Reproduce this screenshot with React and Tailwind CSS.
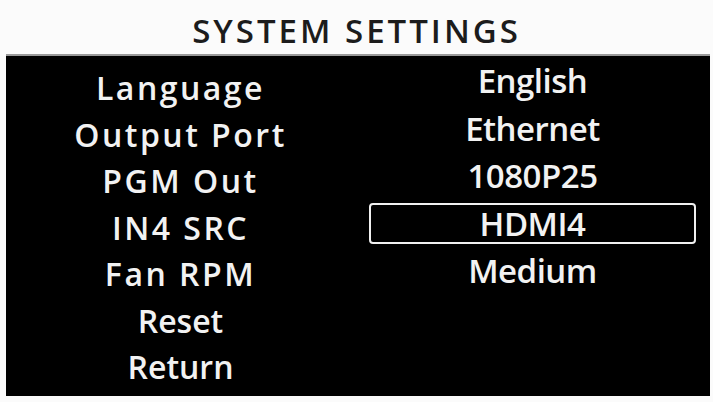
export default function App() {
  const labels = ["Language", "Output Port", "PGM Out", "IN4 SRC", "Fan RPM", "Reset", "Return"];
  const values = ["English", "Ethernet", "1080P25", "HDMI4", "Medium"];
  return (
    <div className="w-[713px] h-[402px] bg-[#fbfbfb] flex flex-col overflow-hidden">
      <div className="h-[54px] flex items-center justify-center pt-[6px]">
        <span className="text-[33px] font-semibold tracking-[3px] text-[#1c1c1c] leading-none" style={{ fontFamily: '"Open Sans", sans-serif' }}>
          SYSTEM SETTINGS
        </span>
      </div>
      <div className="ml-[6px] mr-[3px] h-[342px] bg-black border-t-2 border-[#9a9a9a] grid grid-cols-[349px_1fr]">
        <div className="flex flex-col pt-[9px]">
          {labels.map((l, i) => (
            <div
              key={l}
              className={
                "h-[46.5px] flex items-center justify-center text-[32px] font-semibold text-[#f2f2f2] leading-none " +
                (i < 5 ? "tracking-[2.5px]" : "tracking-normal")
              }
              style={{ fontFamily: '"Open Sans", sans-serif' }}
            >
              {l}
            </div>
          ))}
        </div>
        <div className="flex flex-col pt-[1px]">
          {values.map((v, i) => (
            <div key={v} className="h-[47.5px] flex items-center px-[14px]">
              <div
                className={
                  "w-full h-[41px] flex items-center justify-center text-[33px] font-semibold text-[#f2f2f2] leading-none tracking-[-0.5px] " +
                  (i === 3 ? "border-[2.5px] border-[#f0f0f0] rounded-[4px]" : "")
                }
                style={{ fontFamily: '"Open Sans", sans-serif' }}
              >
                {v}
              </div>
            </div>
          ))}
        </div>
      </div>
    </div>
  );
}
